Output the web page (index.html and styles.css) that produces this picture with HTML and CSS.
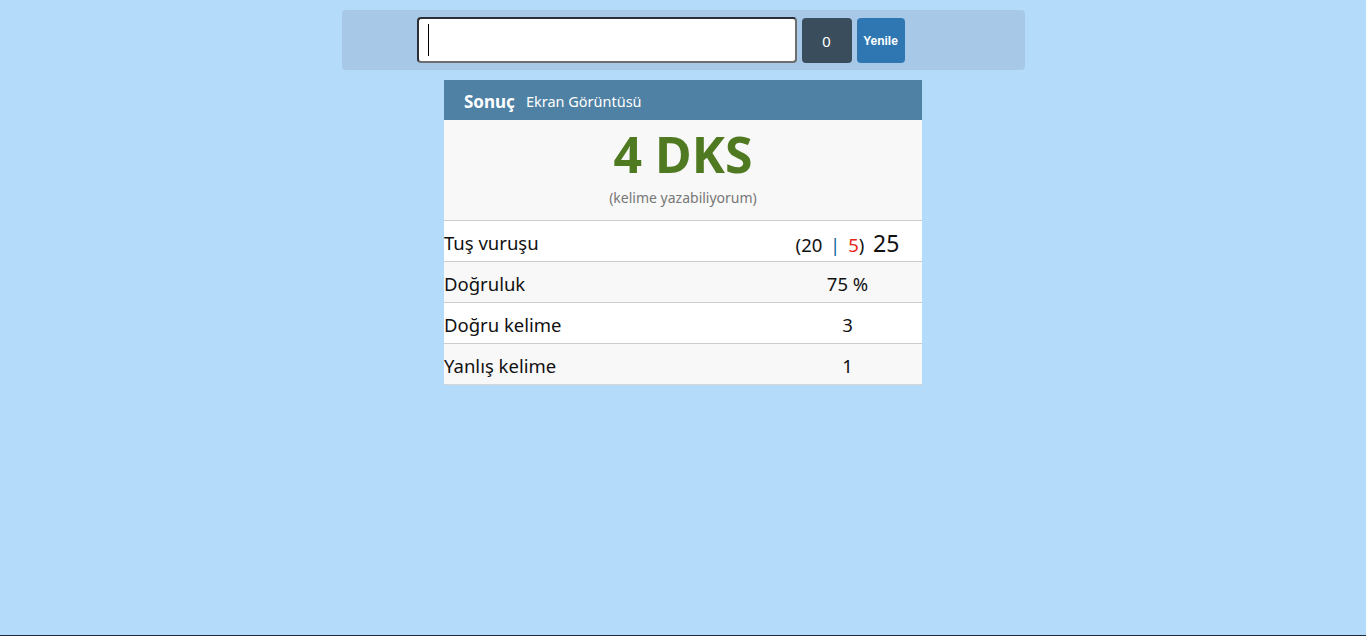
FILE: index.html
```html
<!DOCTYPE html>
<html lang="tr">
<head>
<meta charset="utf-8">
<title>Sonuç</title>
<link rel="stylesheet" href="styles.css">
</head>
<body>
<div class="page">
  <div class="toolbar">
    <div class="input-box"><span class="caret"></span></div>
    <button class="btn btn-count">0</button>
    <button class="btn btn-renew">Yenile</button>
  </div>
  <div class="card">
    <div class="card-head">
      <span class="title">Sonuç</span>
      <span class="subtitle">Ekran Görüntüsü</span>
    </div>
    <div class="score">
      <div class="wpm">4 DKS</div>
      <div class="wpm-note">(kelime yazabiliyorum)</div>
    </div>
    <div class="row">
      <div class="label">Tuş vuruşu</div>
      <div class="value"><span class="paren">(20</span> <span class="sep">|</span> <span class="wrong">5</span><span class="paren">)</span> <span class="total">25</span></div>
    </div>
    <div class="row alt">
      <div class="label">Doğruluk</div>
      <div class="value">75 %</div>
    </div>
    <div class="row">
      <div class="label">Doğru kelime</div>
      <div class="value">3</div>
    </div>
    <div class="row alt">
      <div class="label">Yanlış kelime</div>
      <div class="value">1</div>
    </div>
  </div>
</div>
<div class="bottom-line"></div>
</body>
</html>
```
FILE: styles.css
```css
* { box-sizing: border-box; }
html, body { height: 100%; }
body {
  margin: 0;
  background: #b5dbfb;
  font-family: "Noto Sans", "Open Sans", sans-serif;
  color: #111;
}
.page {
  display: flex;
  flex-direction: column;
  align-items: center;
  padding-top: 10px;
}
.toolbar {
  width: 683px;
  height: 60px;
  margin-left: 1px;
  background: #a7c8e6;
  border-radius: 4px;
  display: flex;
  align-items: center;
  justify-content: center;
  gap: 5px;
  padding-right: 46px;
}
.input-box {
  width: 380px;
  height: 46px;
  background: #fff;
  border: 2px solid #2b2f35;
  border-right-color: #6e6e6e;
  border-bottom-color: #6e6e6e;
  border-radius: 4px;
  display: flex;
  align-items: center;
  padding-left: 9px;
}
.caret {
  width: 1px;
  height: 32px;
  background: #000;
}
.btn {
  border: none;
  border-radius: 4px;
  color: #fff;
  height: 45px;
  font-family: "Liberation Sans", Arial, sans-serif;
  padding: 0;
  margin-top: 1px;
}
.btn-count {
  width: 50px;
  background: #3a4d5c;
  font-size: 15px;
  padding-top: 2px;
}
.btn-renew {
  width: 48px;
  background: #2f77b3;
  font-size: 12px;
  font-weight: bold;
}
.card {
  width: 478px;
  margin-top: 10px;
  background: #fff;
}
.card-head {
  height: 40px;
  background: #4e81a3;
  color: #fff;
  display: flex;
  align-items: center;
  padding-left: 20px;
  gap: 11px;
  padding-top: 2px;
}
.title {
  font-weight: bold;
  font-size: 17px;
}
.subtitle {
  font-size: 14.5px;
}
.score {
  background: #f8f8f8;
  height: 100px;
  text-align: center;
  padding-top: 6px;
}
.wpm {
  font-size: 50px;
  font-weight: bold;
  color: #4f7a21;
  line-height: 56px;
}
.wpm-note {
  font-size: 14px;
  line-height: 18px;
  color: #777;
  margin-top: 7px;
}
.row {
  display: flex;
  align-items: center;
  height: 41px;
  border-top: 1px solid #cccccc;
  font-size: 18.5px;
  background: #fff;
}
.row.alt { background: #f8f8f8; }
.row:last-child { border-bottom: 1px solid #d6d6d6; height: 42px; }
.label {
  flex: 0 0 329px;
  padding-top: 3px;
}
.value {
  flex: 1;
  text-align: center;
  padding-top: 3px;
}
.paren { color: #111; }
.sep { color: #0d66a0; margin: 0 3px; }
.wrong { color: #e8271c; }
.total { font-size: 23px; margin-left: 4px; }
.bottom-line {
  position: fixed;
  left: 0;
  right: 0;
  bottom: 0;
  height: 1px;
  background: #1b2b3b;
}
```
